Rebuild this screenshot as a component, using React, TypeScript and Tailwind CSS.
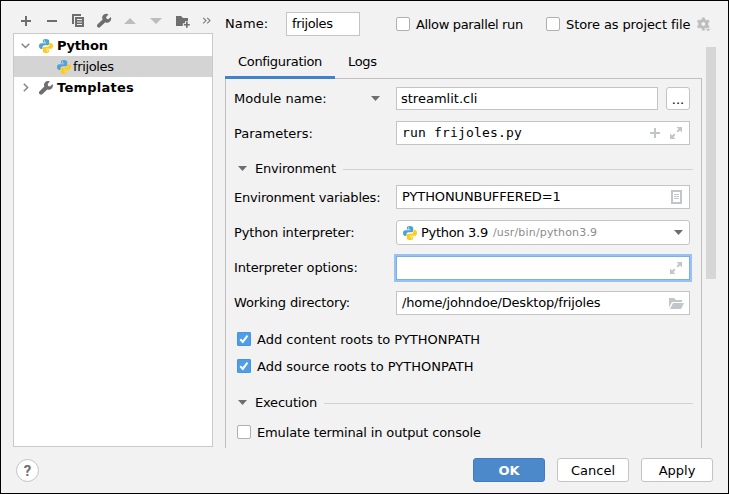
import type { ReactNode } from 'react';

const PY_HALF =
  'M7.9 0.6C5.4 0.6 4.7 1.5 4.7 2.8V4.4H8.2V5H3.1C1.5 5 0.6 6.3 0.6 8.1S1.5 11.2 2.9 11.2H4.3V9.5C4.3 8.2 5.4 7.3 6.6 7.3H9.7C10.7 7.3 11.4 6.5 11.4 5.6V2.8C11.4 1.3 10 0.6 7.9 0.6Z';

function PythonIcon() {
  return (
    <svg width="14" height="14" viewBox="0.6 0.6 14.8 14.8" className="shrink-0">
      <path d={PY_HALF} fill="#4fa3cf" />
      <path d={PY_HALF} fill="#ffcb1c" transform="rotate(180 8 8)" />
      <circle cx="6.4" cy="2.7" r="0.7" fill="#d8ecf6" />
      <circle cx="9.6" cy="13.3" r="0.7" fill="#fff3c4" />
    </svg>
  );
}

function Wrench() {
  return (
    <svg width="14" height="14" viewBox="0 0 14 14" className="shrink-0">
      <path
        d="M10.9 0.5A4 4 0 0 0 5.3 5.5L0.6 10.2A1.9 1.9 0 0 0 3.5 13.1L8.3 8.4A4 4 0 0 0 13.5 3.1L11 5.4L9.1 5L8.7 3Z"
        fill="#6e6e6e"
      />
    </svg>
  );
}

function Triangle() {
  return (
    <svg width="9" height="5" viewBox="0 0 9 5" className="shrink-0">
      <path d="M0 0H9L4.5 5Z" fill="#6e6e6e" />
    </svg>
  );
}

function Expand() {
  return (
    <svg width="12" height="12" viewBox="0 0 12 12" className="shrink-0">
      <path d="M6.5 0H12V5.5L10 3.5L8 5.5L6.5 4L8.5 2ZM0 6.5L2 8.5L4 6.5L5.5 8L3.5 10L5.5 12H0Z" fill="#c1c6ca" />
    </svg>
  );
}

function Check({ on = false }: { on?: boolean }) {
  return on ? (
    <span className="flex size-[14px] shrink-0 items-center justify-center rounded-[1px] border border-[#4793de] bg-[#4e9de7]">
      <svg width="12" height="12" viewBox="0 0 12 12" className="shrink-0">
        <path d="M2.3 6.3L4.8 8.9L9.5 2.6" fill="none" stroke="#fff" strokeWidth="2" />
      </svg>
    </span>
  ) : (
    <span className="size-[14px] shrink-0 rounded-[2px] border border-[#b0b0b0] bg-white" />
  );
}

function Label({ children }: { children: ReactNode }) {
  return <span className="w-[162px] shrink-0">{children}</span>;
}

function Field({ children }: { children?: ReactNode }) {
  return (
    <div className="flex h-6 w-[294px] shrink-0 items-center border border-[#c4c4c4] bg-white pl-[5px]">
      {children}
    </div>
  );
}

function Section({ title }: { title: string }) {
  return (
    <div className="flex h-4 w-[459px] items-center pl-1">
      <Triangle />
      <span className="ml-2 pt-[2px] tracking-[-0.2px]">{title}</span>
      <span className="mt-[2px] ml-[7px] h-px flex-1 bg-[#d1d1d1]" />
    </div>
  );
}

function Toolbar() {
  return (
    <div className="flex h-[33px] items-end pb-[5px] pl-[7px]">
      <svg width="193" height="16" viewBox="20 13 193 16" fill="#6e6e6e" className="shrink-0">
        <path d="M25 16h2v4h4v2h-4v4h-2v-4h-4v-2h4zM47 20h10v2H47z" />
        <path d="M72 14h9v2h-7v8h-2zM75 17h9v10h-9zM77 19v1h5v-1zM77 21.5v1h5v-1zM77 24v1h5v-1z" fillRule="evenodd" />
        <path d="M108.5 14.5A4 4 0 0 0 102.6 19.5L97.6 24.3A1.7 1.7 0 0 0 100.2 27L105.3 22.2A4 4 0 0 0 110.8 17L108.4 19.3L106.6 18.8L106.1 17Z" />
        <path d="M130 18L136 24H124ZM150 18H162L156 24Z" fill="#bdbdbd" />
        <path d="M176 16h5l2 2h5v3.2h-3v2h-2.2v2.8h-6.8z" />
        <path d="M186 21.8h1.7v2.1h2.1v1.7h-2.1v2.1H186v-2.1h-2.1v-1.7h2.1z" />
        <path d="M203.2 17.8l2.8 2.8l-2.8 2.8M207.2 17.8l2.8 2.8l-2.8 2.8" fill="none" stroke="#7a7a7a" strokeWidth="1.1" />
      </svg>
    </div>
  );
}

function Sidebar() {
  return (
    <div className="flex w-[200px] shrink-0 flex-col">
      <Toolbar />
      <div className="-mt-px h-[414px] w-[200px] border border-[#c9c9c9] bg-white pt-px font-bold">
        <div className="flex h-[21px] items-center pl-[7px] tracking-[-0.2px]">
          <svg width="9" height="6" viewBox="0 0 9 6">
            <path d="M0.7 0.8L4.5 4.6L8.3 0.8" fill="none" stroke="#808080" strokeWidth="1.4" />
          </svg>
          <span className="mr-1 ml-[9px] flex"><PythonIcon /></span>
          Python
        </div>
        <div className="flex h-[21px] items-center bg-[#d4d4d4] pl-[43px] font-normal">
          <PythonIcon />
          <span className="ml-[2px] tracking-[-0.35px]">frijoles</span>
        </div>
        <div className="flex h-[21px] items-center pl-[9px] tracking-[0.25px]">
          <svg width="6" height="9" viewBox="0 0 6 9">
            <path d="M0.8 0.7L4.6 4.5L0.8 8.3" fill="none" stroke="#808080" strokeWidth="1.4" />
          </svg>
          <span className="mr-1 ml-[10px] flex"><Wrench /></span>
          Templates
        </div>
      </div>
    </div>
  );
}

function Panel() {
  return (
    <div className="h-[370px] w-[477px] border border-b-0 border-[#c0c0c0] pt-2 pl-2">
      <div className="flex h-[23px] items-center">
        <span className="w-[137px]">Module name:</span>
        <Triangle />
        <div className="ml-4 flex h-[23px] w-[262px] items-center border border-[#c4c4c4] bg-white pl-1">streamlit.cli</div>
        <div className="ml-2 flex h-[23px] w-6 items-center justify-center rounded-[3px] border border-[#c4c4c4] bg-white pt-[3px]">...</div>
      </div>
      <div className="mt-[11px] flex h-6 items-center">
        <Label><span className="block pt-[2px]">Parameters:</span></Label>
        <Field>
          <span className="font-['DejaVu_Sans_Mono',monospace] tracking-[0.17px]">run frijoles.py</span>
          <svg width="10" height="10" viewBox="0 0 10 10" className="mr-[10px] ml-auto">
            <path d="M4 0h2v4h4v2H6v4H4V6H0V4h4z" fill="#c1c6ca" />
          </svg>
          <span className="mr-[7px]"><Expand /></span>
        </Field>
      </div>
      <div className="mt-[15px]"><Section title="Environment" /></div>
      <div className="mt-[9px] flex h-6 items-center">
        <Label><span className="block pt-[2px] tracking-[-0.2px]">Environment variables:</span></Label>
        <Field>
          <span className="tracking-[-0.1px]">PYTHONUNBUFFERED=1</span>
          <svg width="11" height="14" viewBox="0 0 11 14" className="mr-[7px] ml-auto">
            <path d="M1 1h9v12H1z" fill="none" stroke="#c1c6ca" strokeWidth="2" />
            <path d="M3 4.5h5M3 6.5h5M3 8.5h5" stroke="#c1c6ca" />
          </svg>
        </Field>
      </div>
      <div className="mt-[11px] flex h-[25px] items-center">
        <Label><span className="tracking-[-0.15px]">Python interpreter:</span></Label>
        <div className="flex h-[25px] w-[294px] items-center rounded-[3px] border border-[#c4c4c4] bg-white pl-[6px]">
          <PythonIcon />
          <span className="ml-1 tracking-[-0.3px]">Python 3.9</span>
          <span className="ml-[5px] text-[11px] tracking-[0.17px] text-[#8c8c8c]">/usr/bin/python3.9</span>
          <span className="mr-[6px] ml-auto"><Triangle /></span>
        </div>
      </div>
      <div className="mt-[11px] flex h-6 items-center">
        <Label><span className="tracking-[-0.15px]">Interpreter options:</span></Label>
        <div className="flex h-6 w-[294px] items-center border border-[#7eaee2] bg-white shadow-[0_0_0_2px_#97c3f3]">
          <span className="mr-[7px] ml-auto"><Expand /></span>
        </div>
      </div>
      <div className="mt-[11px] flex h-6 items-center">
        <Label><span className="tracking-[-0.15px]">Working directory:</span></Label>
        <Field>
          <span className="tracking-[-0.18px]">/home/johndoe/Desktop/frijoles</span>
          <svg width="15" height="11" viewBox="0 0 15 11" className="mr-[5px] ml-auto">
            <path d="M0 0h5l2 2h6v2H3L0 9.5zM4 5h11l-3 6H1z" fill="#c1c6ca" />
          </svg>
        </Field>
      </div>
      <div className="mt-[17px] flex h-[14px] items-center gap-[6px] pl-[3px]"><Check on /><span className="pt-[2px]">Add content roots to PYTHONPATH</span></div>
      <div className="mt-[13px] flex h-[14px] items-center gap-[6px] pl-[3px]"><Check on /><span className="pt-[2px]">Add source roots to PYTHONPATH</span></div>
      <div className="mt-[21px]"><Section title="Execution" /></div>
      <div className="mt-[15px] flex h-[14px] items-center gap-[6px] pl-[3px] tracking-[-0.15px]"><Check /><span className="pt-[2px]">Emulate terminal in output console</span></div>
    </div>
  );
}

export default function App() {
  return (
    <div className="flex h-[494px] w-[729px] flex-col overflow-hidden border border-black bg-[#f2f2f2] font-['DejaVu_Sans',sans-serif] text-[13px] leading-4 whitespace-nowrap text-black">
      <div className="flex h-[446px] pl-3">
        <Sidebar />
        <main className="ml-3 w-[477px] shrink-0">
          <div className="flex h-[46px] items-center">
            <span className="w-[61px] shrink-0 pb-px tracking-[0.1px]">Name:</span>
            <div className="flex h-6 w-[74px] shrink-0 items-center border border-[#c4c4c4] bg-white pb-px pl-[5px] tracking-[-0.35px]">frijoles</div>
            <div className="ml-9 flex w-[150px] shrink-0 items-center gap-[6px] tracking-[-0.35px]"><Check /><span className="pt-px">Allow parallel run</span></div>
            <div className="flex shrink-0 items-center gap-[6px] tracking-[-0.1px]"><Check /><span className="pt-px">Store as project file</span></div>
            <svg width="14" height="15" viewBox="0 0 14 15" className="ml-[7px] shrink-0">
              <circle cx="6.3" cy="7" r="3.5" fill="none" stroke="#bdbdbd" strokeWidth="3" />
              <path d="M6.3 0.6v2M6.3 11.4v2M0.6 3.8l1.8 1M10.2 9.2l1.8 1M0.6 10.2l1.8-1M10.2 4.8l1.8-1" stroke="#bdbdbd" strokeWidth="2.8" />
              <path d="M8 11.5h6l-3 3z" fill="#bdbdbd" stroke="#f2f2f2" strokeWidth="0.6" />
            </svg>
          </div>
          <div className="flex h-[31px] items-start">
            <div className="w-[110px] pt-[7px] pl-[13px] tracking-[-0.32px]">Configuration</div>
            <div className="pt-[7px] pl-[13px] tracking-[-0.3px]">Logs</div>
          </div>
          <div className="relative z-10 -mt-[3px] h-[3px] w-[110px] translate-y-px bg-[#4083c9]" />
          <Panel />
        </main>
        <div className="mt-[46px] ml-1 h-[232px] w-[10px] bg-[#d6d6d6]" />
      </div>
      <footer className="flex h-[46px] items-start pt-[11px] pl-[15px]">
        <div className="mt-px flex size-[23px] items-center justify-center rounded-full border border-[#c4c4c4] bg-white">
          <span className="font-['Roboto',sans-serif] text-[15px] font-bold text-[#6e6e6e]">?</span>
        </div>
        <div className="ml-auto flex gap-3 pr-[15px]">
          <div className="flex h-6 w-[72px] items-center justify-center rounded-[3px] border border-[#3f7cc2] bg-[#4c89ca] pt-[2px] font-bold text-white">OK</div>
          <div className="flex h-6 w-[72px] items-center justify-center rounded-[3px] border border-[#c4c4c4] bg-white pt-[2px]">Cancel</div>
          <div className="flex h-6 w-[72px] items-center justify-center rounded-[3px] border border-[#c4c4c4] bg-white pt-[2px]">Apply</div>
        </div>
      </footer>
    </div>
  );
}
